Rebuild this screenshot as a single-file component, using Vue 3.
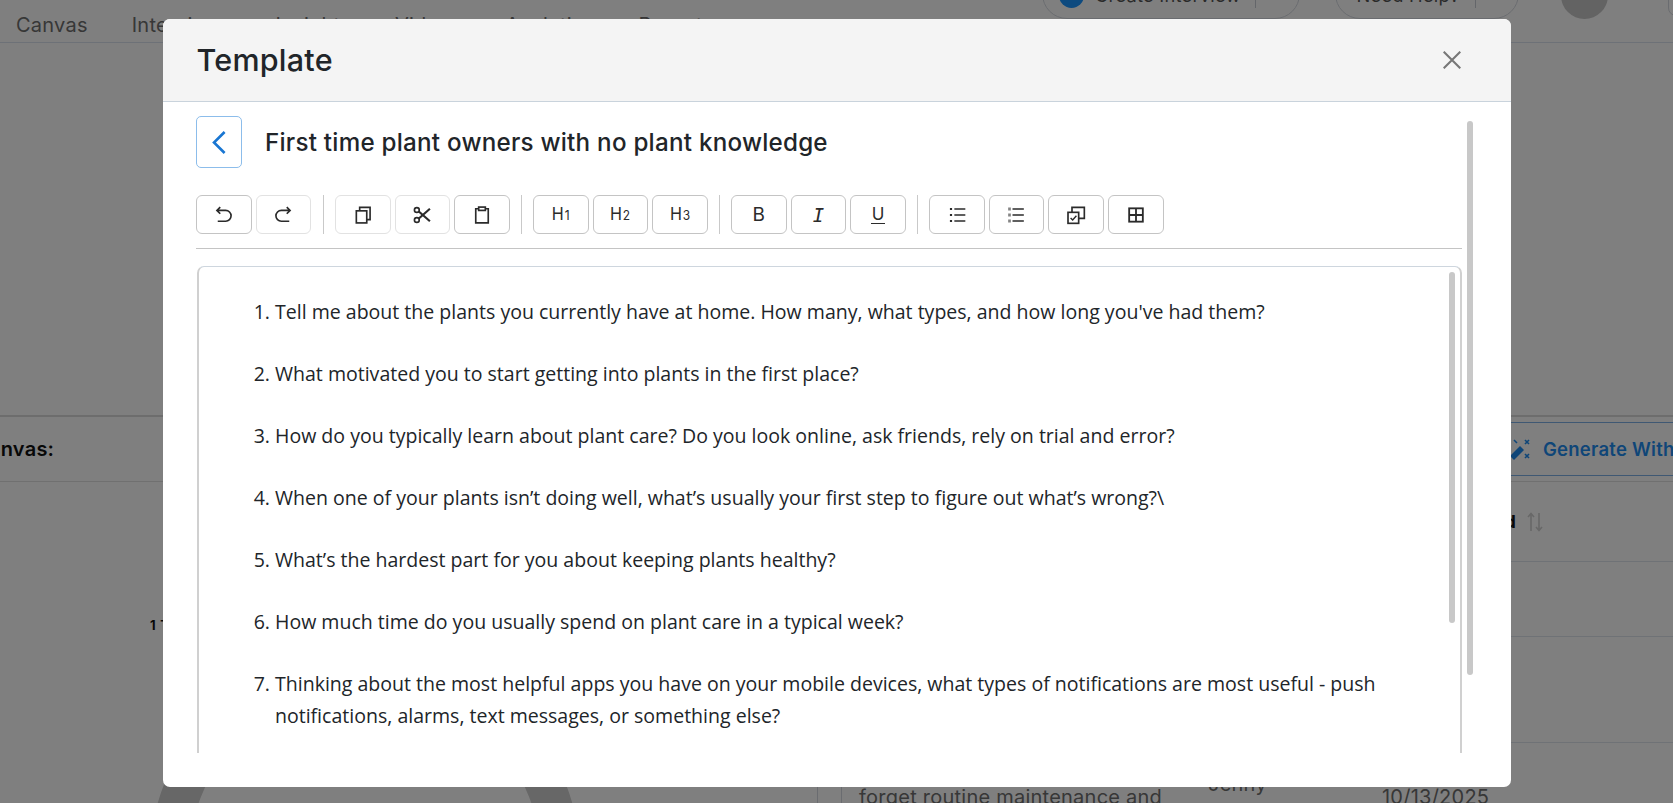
<script setup>
const questions = [
  "Tell me about the plants you currently have at home. How many, what types, and how long you've had them?",
  "What motivated you to start getting into plants in the first place?",
  "How do you typically learn about plant care? Do you look online, ask friends, rely on trial and error?",
  "When one of your plants isn’t doing well, what’s usually your first step to figure out what’s wrong?\\",
  "What’s the hardest part for you about keeping plants healthy?",
  "How much time do you usually spend on plant care in a typical week?",
  "Thinking about the most helpful apps you have on your mobile devices, what types of notifications are most useful - push notifications, alarms, text messages, or something else?"
]
const navItems = ['Canvas', 'Interviews', 'Insights', 'Videos', 'Analytics', 'Reports']
</script>

<template>
  <div class="page">
    <header class="topbar">
      <nav class="nav"><span v-for="item in navItems" :key="item">{{ item }}</span></nav>
      <div class="top-actions">
        <div class="pill pill-create"><i class="blue-dot"></i><span class="w1">Create Interview</span><i class="pill-div"></i></div>
        <div class="pill pill-help"><span class="w2">Need Help?</span><i class="pill-div"></i></div>
        <div class="avatar"></div>
        <div class="corner-box"></div>
      </div>
    </header>
    <div class="canvas-space"></div>
    <section class="section-head">
      <strong class="section-title">Canvas:</strong>
      <div class="generate">
        <svg class="wand" viewBox="0 0 24 24" width="24" height="24" fill="none">
          <path d="M3 19 L13 9 L17 13 L7 23 Z" fill="currentColor" />
          <path d="M18 3 l4 4 M22 3 l-4 4 M18 17 l4 4 M22 17 l-4 4 M7 3 l3 3" stroke="currentColor" stroke-width="1.6" />
        </svg>
        <span>Generate With AI</span>
      </div>
    </section>
    <div class="content">
      <div class="chart">
        <svg class="donut" width="817" height="321"><circle cx="365" cy="380" r="196" fill="none" stroke="#cecece" stroke-width="39" /></svg>
        <span class="chart-label">1 T</span>
      </div>
      <div class="table">
        <div class="t-head">
          <b class="t-head-label">Created</b>
          <svg width="16" height="20" viewBox="0 0 16 20" fill="none" stroke="#d0d0d0" stroke-width="1.6"><path d="M4 19V2 M1 5l3-3.5L7 5 M12 1v17 M9 15l3 3.5 3-3.5" /></svg>
        </div>
        <div class="t-row r1"></div>
        <div class="t-row r2"></div>
        <div class="t-last">
          <div class="c-check"></div>
          <div class="c-text">forget routine maintenance and</div>
          <div class="c-name">Jenny</div>
          <div class="c-date">10/13/2025</div>
        </div>
      </div>
    </div>

    <div class="overlay">
      <div class="modal">
        <div class="modal-head">
          <h2>Template</h2>
          <svg class="close" width="18" height="18" viewBox="0 0 18 18" fill="none" stroke="#777" stroke-width="2.1"><path d="M.7.7l16.6 16.6M17.3.7L.7 17.3" /></svg>
        </div>
        <div class="modal-body">
          <div class="back-row">
            <button class="back"><svg width="14" height="23" viewBox="0 0 14 23" fill="none" stroke="#1976d2" stroke-width="2.6"><path d="M12.6 1 L2 11.5 L12.6 22" /></svg></button>
            <h3>First time plant owners with no plant knowledge</h3>
          </div>
          <div class="toolbar">
            <div class="group">
              <button class="tb"><svg class="ic" viewBox="0 0 24 24"><path d="M7.5 2.5 3.5 6.5l4 4M3.5 6.5H14a6.5 6.5 0 0 1 0 13H4.5" /></svg></button>
              <button class="tb off"><svg class="ic" viewBox="0 0 24 24"><path d="M16.5 2.500 20.500 6.500l-4 4M20.500 6.500H10a6.500 6.500 0 0 0 0 13h9.500" /></svg></button>
            </div>
            <i class="sep"></i>
            <div class="group">
              <button class="tb off"><svg class="ic" viewBox="0 0 24 24"><rect x="4" y="7" width="12.500" height="14.500" /><path d="M8 7V2.800h12.500V17.500h-4" /></svg></button>
              <button class="tb off"><svg class="ic" viewBox="0 0 24 24"><circle cx="5.800" cy="6" r="2.900" /><circle cx="5.800" cy="18" r="2.900" /><path d="M8.200 7.800 21.500 19.500M8.200 16.200 21.500 4.500" stroke-width="2.600" /></svg></button>
              <button class="tb"><svg class="ic" viewBox="0 0 24 24"><path d="M8 4.500H4.500v17h15v-17H16" /><rect x="8" y="2.500" width="8" height="4" /></svg></button>
            </div>
            <i class="sep"></i>
            <div class="group">
              <button class="tb"><span class="hd">H<small>1</small></span></button>
              <button class="tb"><span class="hd">H<small>2</small></span></button>
              <button class="tb"><span class="hd">H<small>3</small></span></button>
            </div>
            <i class="sep"></i>
            <div class="group">
              <button class="tb"><span class="letter">B</span></button>
              <button class="tb"><span class="letter italic">I</span></button>
              <button class="tb"><span class="letter under">U</span></button>
            </div>
            <i class="sep"></i>
            <div class="group">
              <button class="tb"><svg class="ic" viewBox="0 0 24 24"><path d="M8.800 4.800H22M8.800 12H22M8.800 19.200H22" /><path d="M3.500 4.800h2.600M3.500 12h2.600M3.500 19.200h2.600" stroke-width="2.600" /></svg></button>
              <button class="tb"><svg class="ic" viewBox="0 0 24 24"><path d="M7.800 4.800h13.600M7.800 12h13.600M7.800 19.200h13.600" /><path d="M3 4.800h2.400M3 12h2.400M3 19.200h2.400" stroke-width="3.400" stroke-dasharray="1 .5" /></svg></button>
              <button class="tb"><svg class="ic" viewBox="0 0 24 24"><rect x="2.400" y="8.800" width="12.800" height="13.200" /><path d="M7.200 8.800V2.800H22V16h-6.800" /><path d="M5.500 15.500 8 18l4.500-5" stroke-width="1.700" /></svg></button>
              <button class="tb"><svg class="ic table-ic" viewBox="0 0 24 24"><rect x="3.800" y="4" width="16.400" height="16" /><path d="M3.800 12h16.400M12 4v16" /></svg></button>
            </div>
          </div>
          <div class="editor">
            <ol><li v-for="q in questions" :key="q">{{ q }}</li></ol>
            <i class="thumb thumb-inner"></i>
          </div>
          <i class="thumb thumb-outer"></i>
        </div>
      </div>
    </div>
  </div>
</template>

<style>
html, body { margin: 0; background: #fff; }
</style>

<style scoped>
.page { position: relative; width: 1673px; height: 803px; overflow: hidden; background: #fff; display: flex; flex-direction: column; font-family: Inter, "Liberation Sans", sans-serif; color: #212529; letter-spacing: .015em; }
.topbar { flex: none; height: 43px; box-sizing: border-box; border-bottom: 1px solid #dbe2ee; display: flex; justify-content: space-between; }
.nav { display: flex; gap: 44px; padding: 13px 0 0 16px; font-size: 20px; line-height: 24px; color: #6f6f6f; }
.top-actions { display: flex; align-items: flex-start; margin-right: -25px; font-size: 18.300px; color: #555; }
.pill { flex: none; box-sizing: border-box; height: 50px; margin-top: -31px; border: 1px solid #d5d9e0; border-radius: 25px; display: flex; align-items: center; }
.pill-create { width: 258px; padding-left: 16px; }
.pill-help { width: 184px; margin-left: 34.500px; padding-left: 21px; }
.blue-dot { width: 25px; height: 25px; border-radius: 50%; background: #1a94ff; flex: none; margin: 3px 11px 0 0; }
.pill span { flex: none; white-space: nowrap; position: relative; top: 1px; }
.w1 { width: 144px; margin-right: 16px; }
.w2 { width: 102px; margin-right: 16px; }
.pill-div { width: 1px; height: 28px; background: #c8ccd4; flex: none; }
.avatar { flex: none; width: 47px; height: 47px; margin: -28px 0 0 42.500px; border-radius: 50%; background: #c6c6c6; }
.corner-box { flex: none; width: 30px; height: 46px; margin: -30px 0 0 60px; border: 1px solid #d5d9e0; border-radius: 8px; box-sizing: border-box; }
.canvas-space { flex: none; height: 372px; }
.section-head { flex: none; box-sizing: border-box; height: 67px; border-top: 2px solid #dadada; border-bottom: 1px solid #e0e0e0; display: flex; align-items: center; justify-content: space-between; }
.section-title { margin-left: -26px; font-size: 20px; font-weight: 600; color: #111; }
.generate { box-sizing: border-box; width: 250px; height: 54px; margin-right: -57px; border-top: 1px solid #7fb0e6; border-bottom: 1px solid #7fb0e6; display: flex; align-items: center; gap: 12px; padding-left: 27px; color: #1e8cf0; font-size: 18.500px; font-weight: 600; white-space: nowrap; }
.wand { flex: none; }
.content { flex: 1; display: flex; min-height: 0; }
.chart { position: relative; flex: none; width: 817px; }
.donut { position: absolute; left: 0; top: 0; }
.chart-label { position: absolute; left: 150px; top: 135px; font-size: 13px; line-height: 16px; font-weight: 700; color: #111; word-spacing: 1px; }
.table { flex: 1; min-width: 0; }
.t-head { box-sizing: border-box; height: 80px; border-bottom: 1px solid #dfe4ec; display: flex; align-items: center; gap: 11px; }
.t-head-label { box-sizing: border-box; width: 699px; text-align: right; font-size: 18px; font-weight: 700; color: #111; }
.t-row { box-sizing: border-box; border-bottom: 1px solid #dfe4ec; }
.r1 { height: 75px; }
.r2 { height: 106px; }
.t-last { display: flex; font-size: 20px; line-height: 28px; color: #6f6f6f; height: 60px; white-space: nowrap; }
.c-check { box-sizing: border-box; width: 24px; border-left: 1px solid #d5d9e0; }
.c-text { box-sizing: border-box; width: 367px; padding: 40px 0 0 17px; border-left: 1px solid #d5d9e0; }
.c-name { width: 174px; padding-top: 27px; }
.c-date { padding-top: 40px; }

.overlay { position: absolute; inset: 0; background: rgba(0, 0, 0, .5); display: flex; justify-content: center; align-items: flex-start; padding-top: 19px; box-sizing: border-box; }
.modal { width: 1348px; height: 768px; background: #fff; border-radius: 7px; overflow: hidden; display: flex; flex-direction: column; }
.modal-head { flex: none; box-sizing: border-box; height: 83px; padding: 0 50px 0 34px; background: #f4f4f4; border-bottom: 1px solid #c9d3dc; display: flex; align-items: center; justify-content: space-between; }
h2 { margin: 0; font-size: 30.500px; font-weight: 500; line-height: 40px; color: #212529; }
.modal-body { position: relative; height: 651px; flex: none; box-sizing: border-box; padding: 14px 49px 0 33.500px; overflow: hidden; }
.back-row { display: flex; align-items: center; gap: 23px; height: 52px; margin-bottom: 27px; }
.back { box-sizing: border-box; width: 46px; height: 52px; padding: 0; background: #fff; border: 1px solid #8cbdeb; border-radius: 5px; display: flex; align-items: center; justify-content: center; }
h3 { margin: 0; font-size: 24.200px; font-weight: 500; color: #212529; }
.toolbar { display: flex; height: 39px; padding-bottom: 14px; border-bottom: 1px solid #c4c4c4; margin-bottom: 17px; box-sizing: content-box; letter-spacing: 0; }
.group { display: flex; gap: 4px; }
.sep { flex: none; width: 1px; height: 39px; margin: 0 11px; background: #c9c9c9; }
.sep:first-of-type { margin-left: 11.700px; }
.tb { box-sizing: border-box; width: 55.670px; height: 39px; padding: 0; background: #fff; border: 1px solid #c4c4c4; border-radius: 6px; display: flex; align-items: center; justify-content: center; color: #2b2b2b; }
.tb.off { border-color: #e2e2e2; }
.ic { width: 20px; height: 20px; fill: none; stroke: currentColor; stroke-width: 2; }
.table-ic { stroke-width: 2.200; }
.hd { display: block; font-size: 17.500px; line-height: 20px; font-family: Inter, sans-serif; transform: scaleX(.92); }
.hd small { font-size: 13px; margin-left: 1px; }
.letter { font-size: 19px; line-height: 20px; font-family: Inter, sans-serif; }
.italic { font-family: "DejaVu Sans Mono", monospace; font-style: italic; font-size: 19px; }
.under { font-size: 17px; line-height: 18px; padding: 0 1px; border-bottom: 1.500px solid currentColor; }
.editor { position: relative; box-sizing: border-box; height: 640px; margin-left: 1px; border: 2px solid #d0d0d0; border-top: 1px solid #ced6de; border-bottom: 0; border-radius: 7px 7px 0 0; padding: 29px 64px 0 0; }
ol { margin: 0; padding: 0 0 0 76px; font-family: "Open Sans", "Noto Sans", sans-serif; font-size: 19.550px; line-height: 32px; letter-spacing: 0; color: #212529; }
li { margin-bottom: 30px; }
.thumb { position: absolute; display: block; width: 6px; border-radius: 3px; background: #c8c8c8; }
.thumb-outer { right: 37.500px; top: 19px; height: 554px; }
.thumb-inner { right: 5px; top: 5px; height: 351px; }
</style>
